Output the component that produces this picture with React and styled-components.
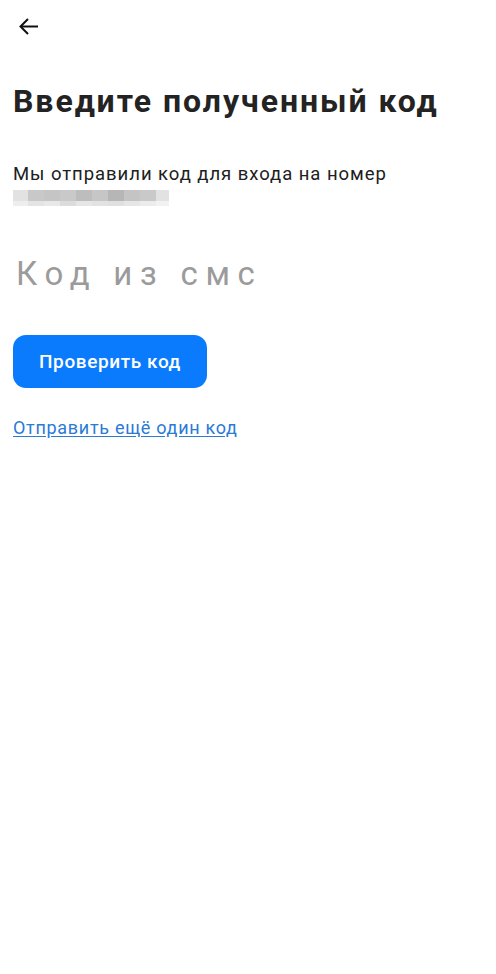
import React from "react";
import styled, { createGlobalStyle } from "styled-components";

const Global = createGlobalStyle`
  html, body { margin: 0; padding: 0; background: #ffffff; }
  body { font-family: Roboto, "Noto Sans", Arial, sans-serif; -webkit-font-smoothing: antialiased; }
`;

const Page = styled.div`
  width: 496px;
  min-height: 974px;
  box-sizing: border-box;
  padding: 14px 13px 0 13px;
  display: flex;
  flex-direction: column;
  align-items: flex-start;
`;

const BackButton = styled.button`
  border: 0;
  background: none;
  padding: 0;
  margin: 0 0 0 3px;
  width: 24px;
  height: 24px;
  display: flex;
  color: #111;
  cursor: pointer;
`;

const Title = styled.h1`
  margin: 43px 0 0 0;
  font-family: Roboto, sans-serif;
  font-weight: 700;
  font-size: 32px;
  line-height: 40px;
  color: #232323;
  letter-spacing: 1.95px;
`;

const Body = styled.p`
  margin: 42px 0 0 0;
  font-size: 18.5px;
  line-height: 22px;
  color: #202020;
  letter-spacing: 0.95px;
`;

const Masked = styled.div`
  margin-top: 5px;
  display: grid;
  grid-template-columns: 15px repeat(8, 16px) 13px;
  grid-template-rows: 11px 5px;
`;

const Cell = styled.span`
  background: ${(p) => p.$c};
`;

const CodeInput = styled.input`
  margin-top: 48px;
  width: 300px;
  border: 0;
  outline: none;
  padding: 0 0 0 3px;
  background: transparent;
  font-family: Roboto, sans-serif;
  font-size: 33px;
  line-height: 40px;
  height: 40px;
  letter-spacing: 7.7px;
  color: #222;
  &::placeholder { color: #9b9b9b; }
`;

const PrimaryButton = styled.button`
  margin-top: 41px;
  width: 194px;
  height: 53px;
  border: 0;
  border-radius: 13px;
  background: #0a7bfd;
  color: #fff;
  font-family: Roboto, sans-serif;
  font-weight: 500;
  font-size: 19px;
  letter-spacing: 0.6px;
  cursor: pointer;
  padding: 0;
`;

const LinkText = styled.a`
  margin-top: 29px;
  font-size: 18px;
  line-height: 22px;
  color: #2a7ad6;
  letter-spacing: 0.7px;
  text-decoration: underline;
  text-underline-offset: 2px;
  cursor: pointer;
`;

const top = ["#e2e2e2", "#c8c8c8", "#c5c5c5", "#c9c9c9", "#bdbdbd", "#c6c6c6", "#b6b6b6", "#c4c4c4", "#c9c9c9", "#e2e2e2"];
const bottom = ["#eeeeee", "#e4e4e4", "#e8e8e8", "#dcdcdc", "#e6e6e6", "#e2e2e2", "#e0e0e0", "#e6e6e6", "#ececec", "#f2f2f2"];

export default function App() {
  return (
    <>
      <Global />
      <Page>
        <BackButton aria-label="Назад">
          <svg width="24" height="24" viewBox="0 0 24 24" fill="none" stroke="currentColor" strokeWidth="2" strokeLinecap="butt" strokeLinejoin="miter">
            <path d="M22 12.5H5" />
            <path d="M12 5 L4.5 12.5 L12 20" />
          </svg>
        </BackButton>
        <Title>Введите полученный код</Title>
        <Body>Мы отправили код для входа на номер</Body>
        <Masked>
          {top.map((c, i) => <Cell key={"t" + i} $c={c} />)}
          {bottom.map((c, i) => <Cell key={"b" + i} $c={c} />)}
        </Masked>
        <CodeInput placeholder="Код из смс" />
        <PrimaryButton>Проверить код</PrimaryButton>
        <LinkText>Отправить ещё один код</LinkText>
      </Page>
    </>
  );
}
